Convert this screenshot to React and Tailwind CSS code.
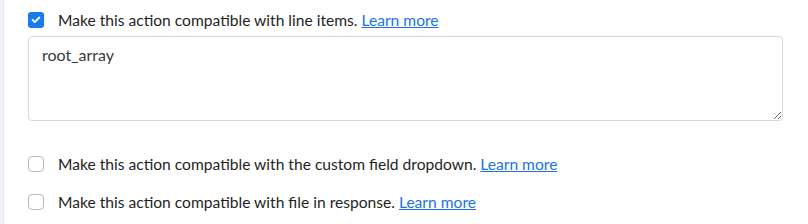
import { Check } from "lucide-react";

const Box = ({ checked }) =>
  checked ? (
    <span className="flex h-4 w-4 shrink-0 items-center justify-center rounded-[3px] bg-[#1b7af0]">
      <Check className="h-[10px] w-[10px] text-white" strokeWidth={4.5} />
    </span>
  ) : (
    <span className="h-4 w-4 shrink-0 rounded-[4px] border border-[#b4b9c1] bg-white" />
  );

const Row = ({ checked, text }) => (
  <label className="flex items-center gap-[14px] text-[15.6px] leading-[18px] text-[#1f1f1f]">
    <Box checked={checked} />
    <span>
      {text}{" "}
      <a href="#" className="text-[#1a73e8] underline">
        Learn more
      </a>
    </span>
  </label>
);

export default function App() {
  return (
    <div className="flex h-[224px] w-[808px] bg-white font-['Lato',sans-serif]">
      <div className="w-[4px] border-r border-[#e3e7ee] bg-[#eef1f6]" />
      <div className="flex-1 pl-[24px] pr-[25px] pt-[11px]">
        <Row checked text="Make this action compatible with line items." />
        <textarea
          defaultValue="root_array"
          className="mt-[7px] block h-[85px] w-full resize-y rounded-[4px] border border-[#d3d7de] px-[13px] py-[9px] text-[16px] leading-[18px] text-[#3a3a3a] outline-none"
        />
        <div className="mt-[34px] flex flex-col gap-[20px]">
          <Row text="Make this action compatible with the custom field dropdown." />
          <Row text="Make this action compatible with file in response." />
        </div>
      </div>
    </div>
  );
}
